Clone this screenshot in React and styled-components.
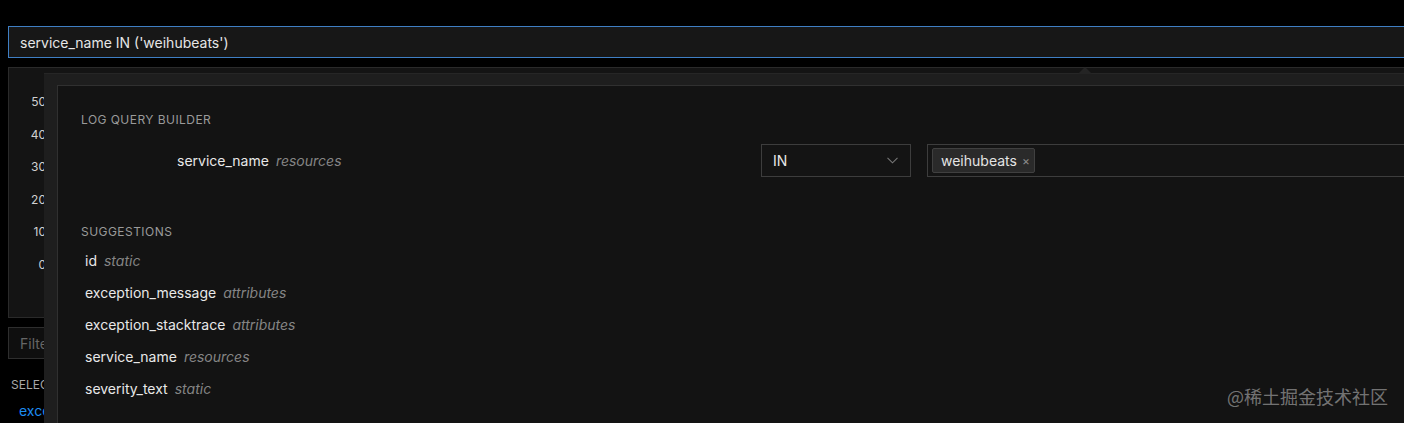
import React from "react";
import styled, { createGlobalStyle } from "styled-components";

const GlobalStyle = createGlobalStyle`
  html, body { margin: 0; padding: 0; background: #000; overflow: hidden; }
  body { font-family: Inter, "Liberation Sans", "Noto Sans CJK SC", sans-serif; -webkit-font-smoothing: antialiased; }
  * { box-sizing: border-box; }
`;

const Page = styled.div`
  position: relative;
  width: 1404px;
  height: 423px;
  overflow: hidden;
  padding: 26px 0 0 8px;
  background: #000;
`;

const QueryInput = styled.div`
  width: 1420px;
  height: 32px;
  border: 1px solid #3f7fc4;
  background: #171717;
  color: #e6e6e6;
  font-size: 14px;
  display: flex;
  align-items: center;
  padding-left: 11px;
`;

const ChartPanel = styled.div`
  margin-top: 9px;
  width: 1420px;
  height: 251px;
  border: 1px solid #2a2a2a;
  background: #141414;
  display: flex;
  flex-direction: column;
  padding: 26px 0 0 0;
`;

const Tick = styled.div`
  width: 37px;
  text-align: right;
  font-size: 12px;
  color: #d0d0d0;
  height: 32.5px;
  line-height: 16px;
`;

const FilterInput = styled.div`
  margin-top: 9px;
  width: 1420px;
  height: 32px;
  border: 1px solid #2e2e2e;
  background: #0f0f0f;
  color: #666;
  font-size: 14px;
  display: flex;
  align-items: center;
  padding-left: 11px;
`;

const SectionLabel = styled.div`
  margin-top: 18px;
  padding-left: 3px;
  font-size: 12px;
  color: #a8a8a8;
  text-transform: uppercase;
`;

const FieldLink = styled.div`
  margin-top: 10px;
  padding-left: 11px;
  font-size: 14px;
  color: #1d8cf0;
`;

const Popover = styled.div`
  position: absolute;
  left: 44px;
  top: 73px;
  width: 1400px;
  height: 400px;
  background: #1e1e1e;
  border-top: 1px solid #262626;
  padding: 11px 0 0 13px;
`;

const Arrow = styled.div`
  position: absolute;
  left: 1034px;
  top: -7px;
  width: 0;
  height: 0;
  border-left: 7px solid transparent;
  border-right: 7px solid transparent;
  border-bottom: 7px solid #242424;
`;

const PopoverBody = styled.div`
  width: 100%;
  height: 100%;
  background: #131313;
  border: 1px solid #303030;
  padding: 26px 0 0 23px;
`;

const Heading = styled.div`
  font-size: 12px;
  line-height: 16px;
  color: #9a9a9a;
  text-transform: uppercase;
  letter-spacing: 0.45px;
`;

const BuilderRow = styled.div`
  display: flex;
  align-items: center;
  margin-top: 16px;
  height: 33px;
`;

const FieldCell = styled.div`
  width: 680px;
  padding-left: 96px;
  font-size: 14px;
  color: #e8e8e8;
  display: flex;
  align-items: baseline;
`;

const Kind = styled.span`
  font-style: italic;
  color: #858585;
  margin-left: ${(p) => p.$gap || 8}px;
  font-size: 14px;
`;

const Select = styled.div`
  width: 150px;
  height: 33px;
  border: 1px solid #3d3d3d;
  background: #141414;
  display: flex;
  align-items: center;
  justify-content: space-between;
  padding: 0 12px 0 11px;
  font-size: 14px;
  color: #e8e8e8;
`;

const ValueBox = styled.div`
  margin-left: 16px;
  flex: 1;
  height: 33px;
  border: 1px solid #3d3d3d;
  background: #141414;
  display: flex;
  align-items: center;
  padding-left: 4px;
`;

const Tag = styled.div`
  height: 25px;
  display: flex;
  align-items: center;
  gap: 5px;
  padding: 0 4px 0 8px;
  background: #2a2a2a;
  border: 1px solid #404040;
  border-radius: 2px;
  font-size: 14px;
  color: #e4e4e4;
`;

const TagClose = styled.span`
  color: #8a8a8a;
  font-size: 12px;
`;

const SuggestHeading = styled(Heading)`
  margin-top: 47px;
`;

const SuggestList = styled.div`
  margin-top: 4px;
  padding-left: 4px;
  display: flex;
  flex-direction: column;
`;

const SuggestItem = styled.div`
  height: 32px;
  display: flex;
  align-items: center;
  font-size: 14px;
  color: #e8e8e8;
`;

const Watermark = styled.div`
  position: absolute;
  right: 16px;
  bottom: 14px;
  font-size: 18px;
  color: rgba(255, 255, 255, 0.42);
  font-family: "Noto Sans CJK SC", "Liberation Sans", sans-serif;
`;

const suggestions = [
  ["id", "static"],
  ["exception_message", "attributes"],
  ["exception_stacktrace", "attributes"],
  ["service_name", "resources"],
  ["severity_text", "static"],
];

const ticks = ["50", "40", "30", "20", "10", "0"];

export default function App() {
  return (
    <>
      <GlobalStyle />
      <Page>
        <QueryInput>service_name IN ('weihubeats')</QueryInput>
        <ChartPanel>
          {ticks.map((t) => (
            <Tick key={t}>{t}</Tick>
          ))}
        </ChartPanel>
        <FilterInput>Filter</FilterInput>
        <SectionLabel>Selected fields</SectionLabel>
        <FieldLink>exception_message</FieldLink>
        <Popover>
          <Arrow />
          <PopoverBody>
            <Heading>Log Query Builder</Heading>
            <BuilderRow>
              <FieldCell>
                service_name<Kind $gap={7}>resources</Kind>
              </FieldCell>
              <Select>
                IN
                <svg width="11" height="7" viewBox="0 0 11 7" fill="none">
                  <path d="M0.5 0.8L5.5 5.8L10.5 0.8" stroke="#777" strokeWidth="1.1" />
                </svg>
              </Select>
              <ValueBox>
                <Tag>
                  weihubeats<TagClose>×</TagClose>
                </Tag>
              </ValueBox>
            </BuilderRow>
            <SuggestHeading>Suggestions</SuggestHeading>
            <SuggestList>
              {suggestions.map(([name, kind]) => (
                <SuggestItem key={name}>
                  {name}
                  <Kind $gap={7}>{kind}</Kind>
                </SuggestItem>
              ))}
            </SuggestList>
          </PopoverBody>
        </Popover>
        <Watermark>@稀土掘金技术社区</Watermark>
      </Page>
    </>
  );
}
